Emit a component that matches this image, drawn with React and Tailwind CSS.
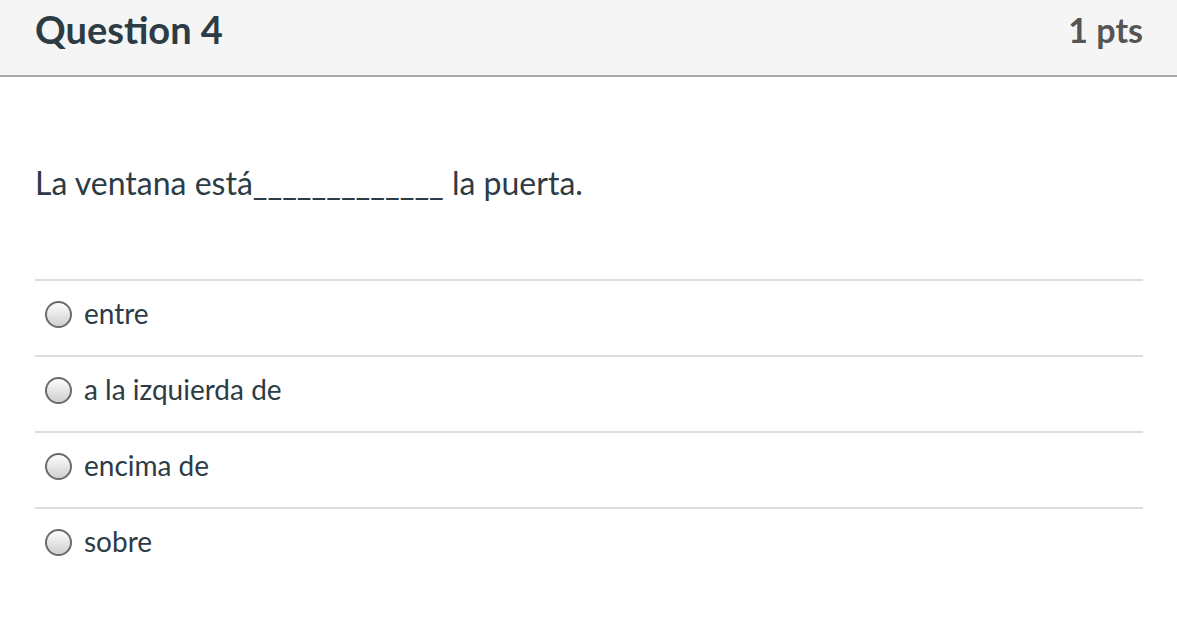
const options = ["entre", "a la izquierda de", "encima de", "sobre"];

const Radio = () => (
  <span className="block w-[27px] h-[27px] rounded-full border-2 border-[#6b6b6b] bg-gradient-to-b from-[#fdfdfd] to-[#cfcfcf] shrink-0" />
);

export default function App() {
  return (
    <div className="w-full min-h-screen bg-white text-[#2d3b45] font-['Lato','Noto_Sans',sans-serif]">
      <div className="h-[77px] bg-[#f5f5f5] border-b-2 border-[#a8a8a8] flex items-center justify-between pl-[35px] pr-[34px]">
        <h2 className="text-[38px] font-bold leading-none pb-[17px]">Question 4</h2>
        <span className="text-[34px] font-bold leading-none text-[#555] pb-[15px]">1 pts</span>
      </div>
      <div className="pl-[35px] pr-[34px]">
        <p className="text-[32px] leading-none pt-[90px] pb-[80px]">
          La ventana está_____________ la puerta.
        </p>
        <div>
          {options.map((opt) => (
            <div
              key={opt}
              className="flex items-center gap-[12px] h-[76px] border-t-2 border-[#dddddd] pl-[10px] pb-[7px]"
            >
              <Radio />
              <span className="text-[28px] leading-none pb-[3px]">{opt}</span>
            </div>
          ))}
        </div>
      </div>
    </div>
  );
}
